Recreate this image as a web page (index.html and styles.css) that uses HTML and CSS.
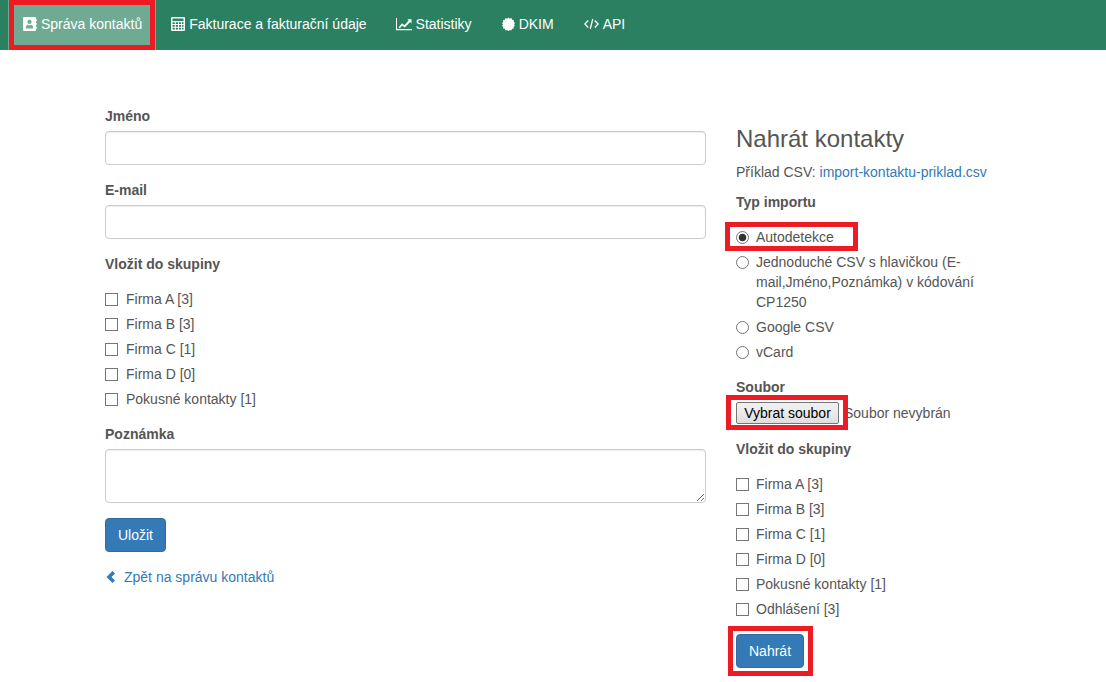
FILE: index.html
```html
<!DOCTYPE html>
<html lang="cs">
<head>
<meta charset="utf-8">
<title>Nahrát kontakty</title>
<link rel="stylesheet" href="styles.css">
</head>
<body>
<div class="page">
  <nav class="topnav">
    <a class="nav-item active" href="#">
      <svg class="ico w14" viewBox="0 0 14 14"><path fill="#fff" fill-rule="evenodd" d="M1 0h11a1 1 0 0 1 1 1v1.500h1v1.500h-1v2.200h1v1.500h-1v2.200h1v1.500h-1V13a1 1 0 0 1-1 1H1a1 1 0 0 1-1-1V1a1 1 0 0 1 1-1zM6.500 2.800a2.100 2.100 0 1 0 0 4.200 2.100 2.100 0 0 0 0-4.200zM2.800 11.500c0-2.200.9-3.700 2.100-3.700.5.400 1 .6 1.600.6s1.100-.2 1.600-.6c1.200 0 2.100 1.500 2.100 3.700z"/></svg>
      <span>Správa kontaktů</span>
    </a>
    <a class="nav-item" href="#">
      <svg class="ico w14" viewBox="0 0 14 14"><path fill="#fff" fill-rule="evenodd" d="M1 0h12a1 1 0 0 1 1 1v12a1 1 0 0 1-1 1H1a1 1 0 0 1-1-1V1a1 1 0 0 1 1-1zM1.500 1.500v2.500h11V1.500zM1.500 5.200v1.800h2.300V5.200zM4.800 5.200v1.800h2.200V5.200zM8 5.200v1.800h2.100V5.200zM11 5.200v1.800h1.500V5.200zM1.500 8v1.800h2.300V8zM4.800 8v1.800h2.200V8zM8 8v1.800h2.100V8zM11 8v1.800h1.500V8zM1.500 10.800v1.700h2.300v-1.700zM4.800 10.800v1.700h2.200v-1.700zM8 10.800v1.700h2.100v-1.700zM11 10.800v1.700h1.500v-1.700z"/></svg>
      <span>Fakturace a fakturační údaje</span>
    </a>
    <a class="nav-item nudge" href="#">
      <svg class="ico w16" viewBox="0 0 16 14"><path fill="#fff" d="M1 1v11h15v1.200H0V1z"/><path fill="#fff" d="M2.500 10.500 6 6.200l2.500 2L12.700 3.600l-1.400-1.300H15.500v4.200l-1.300-1.400L8.700 10.600 6.300 8.600 3.700 11.500z"/></svg>
      <span>Statistiky</span>
    </a>
    <a class="nav-item" href="#">
      <svg class="ico w13" viewBox="0 0 13 14"><path fill="#fff" d="M6.500 .5l1.300 1.200 1.700-.6.6 1.700 1.800.2-.2 1.800 1.300 1.200-1 1.300 1 1.500-1.400 1 .2 1.800-1.800.2-.6 1.600-1.700-.5-1.200 1.300-1.300-1.300-1.700.5-.6-1.600-1.800-.2.2-1.800L0 8.800l1-1.500-1-1.300 1.300-1.200-.2-1.800 1.800-.2.6-1.700 1.700.6z"/></svg>
      <span>DKIM</span>
    </a>
    <a class="nav-item" href="#">
      <svg class="ico w15" viewBox="0 0 15 14"><path fill="none" stroke="#fff" stroke-width="1.300" d="M4.200 3.500.9 7l3.300 3.500M10.800 3.500 14.100 7l-3.300 3.500M8.800 2 6.200 12"/></svg>
      <span>API</span>
    </a>
  </nav>

  <main class="content">
    <form class="left-col">
      <div class="group">
        <label class="field-label">Jméno</label>
        <input class="control" type="text">
      </div>
      <div class="group">
        <label class="field-label">E-mail</label>
        <input class="control" type="text">
      </div>
      <div class="group">
        <label class="field-label">Vložit do skupiny</label>
        <div class="choices">
          <label class="choice"><input type="checkbox"><span>Firma A [3]</span></label>
          <label class="choice"><input type="checkbox"><span>Firma B [3]</span></label>
          <label class="choice"><input type="checkbox"><span>Firma C [1]</span></label>
          <label class="choice"><input type="checkbox"><span>Firma D [0]</span></label>
          <label class="choice"><input type="checkbox"><span>Pokusné kontakty [1]</span></label>
        </div>
      </div>
      <div class="group">
        <label class="field-label">Poznámka</label>
        <textarea class="control area"></textarea>
      </div>
      <div class="group">
        <button class="btn" type="button">Uložit</button>
      </div>
      <a class="back-link" href="#">
        <svg class="chevron" viewBox="0 0 10 12"><path fill="#337ab7" d="M6.500 0 9 2.500 5.500 6 9 9.500 6.500 12 .5 6z"/></svg>
        <span>Zpět na správu kontaktů</span>
      </a>
    </form>

    <form class="right-col">
      <h3 class="title">Nahrát kontakty</h3>
      <p class="example">Příklad CSV: <a href="#">import-kontaktu-priklad.csv</a></p>
      <div class="group">
        <label class="field-label">Typ importu</label>
        <div class="choices">
          <label class="choice"><input type="radio" name="typ" checked><span>Autodetekce</span></label>
          <label class="choice"><input type="radio" name="typ"><span>Jednoduché CSV s hlavičkou (E-mail,Jméno,Poznámka) v kódování CP1250</span></label>
          <label class="choice"><input type="radio" name="typ"><span>Google CSV</span></label>
          <label class="choice"><input type="radio" name="typ"><span>vCard</span></label>
        </div>
      </div>
      <div class="group">
        <label class="field-label">Soubor</label>
        <div class="file-row">
          <button class="file-btn" type="button">Vybrat soubor</button>
          <span class="file-name">Soubor nevybrán</span>
        </div>
      </div>
      <div class="group">
        <label class="field-label">Vložit do skupiny</label>
        <div class="choices">
          <label class="choice"><input type="checkbox"><span>Firma A [3]</span></label>
          <label class="choice"><input type="checkbox"><span>Firma B [3]</span></label>
          <label class="choice"><input type="checkbox"><span>Firma C [1]</span></label>
          <label class="choice"><input type="checkbox"><span>Firma D [0]</span></label>
          <label class="choice"><input type="checkbox"><span>Pokusné kontakty [1]</span></label>
          <label class="choice"><input type="checkbox"><span>Odhlášení [3]</span></label>
        </div>
      </div>
      <button class="btn" type="button">Nahrát</button>
    </form>
  </main>

  <div class="mark mark-nav"></div>
  <div class="mark mark-auto"></div>
  <div class="mark mark-file"></div>
  <div class="mark mark-send"></div>
</div>
</body>
</html>
```
FILE: styles.css
```css
* { box-sizing: border-box; }
html, body { margin: 0; padding: 0; height: 100%; overflow: hidden; background: #fff; }
body { font: 14px/20px "Liberation Sans", Arial, sans-serif; color: #555; }
a { color: #337ab7; text-decoration: none; }

.page { position: relative; height: 682px; overflow: hidden; }

.topnav { display: flex; height: 50px; padding-left: 8px; background: #2a8060; }
.nav-item { display: flex; align-items: center; gap: 4px; padding: 0 15px 2px; color: #fff; white-space: nowrap; }
.nav-item.active { background: #6faa92; padding-right: 14px; }
.nav-item.nudge { padding-left: 14px; }
.ico { display: block; height: 14px; flex: none; }
.w13 { width: 13px; }
.w14 { width: 14px; }
.w15 { width: 15px; }
.w16 { width: 16px; }

.content { display: flex; align-items: flex-start; gap: 30px; padding: 56px 0 0 105px; }
.left-col { width: 601px; flex: none; }
.right-col { width: 252px; flex: none; padding-top: 20px; }

.group { margin-bottom: 15px; }
.field-label { display: block; margin-bottom: 5px; font-weight: 700; }

.control { display: block; width: 100%; height: 34px; padding: 6px 12px; border: 1px solid #ccc; border-radius: 4px; background: #fff; color: #555; font: inherit; box-shadow: inset 0 1px 1px rgba(0,0,0,.075); }
.control.area { height: 54px; resize: vertical; }

.choices { display: flex; flex-direction: column; gap: 5px; padding-top: 10px; }
.choice { display: flex; align-items: flex-start; }
.choice input { appearance: none; flex: none; width: 13px; height: 13px; margin: 4px 7px 0 0; border: 1px solid #767676; background: #fff; }
.left-col .choice input { margin-right: 8px; }
.choice input[type="radio"] { border-radius: 50%; }
.choice input[type="radio"]:checked { background: radial-gradient(circle, #333 0, #333 3.4px, #fff 4.2px); }

.btn { display: block; height: 34px; padding: 6px 12px; border: 1px solid #2e6da4; border-radius: 4px; background: #337ab7; color: #fff; font: inherit; font-weight: 400; }

.back-link { display: flex; align-items: center; gap: 7px; }
.chevron { display: block; width: 12px; height: 12px; flex: none; }

.title { margin: 0 0 10px; font-size: 24px; font-weight: 500; line-height: 26px; }
.example { margin: 0 0 10px; }

.file-row { display: flex; align-items: center; gap: 5px; height: 22px; }
.file-btn { height: 22px; width: 103px; padding: 0; border: 1px solid #767676; border-radius: 2px; background: linear-gradient(#f0f0f0, #ededed 38%, #dedede); color: #000; font: 14px "Liberation Sans", Arial, sans-serif; }
.file-name { white-space: nowrap; }

.mark { position: absolute; border: 5px solid #ed1c24; pointer-events: none; }
.mark-nav { left: 9px; top: 0; width: 146px; height: 50px; }
.mark-auto { left: 725px; top: 222px; width: 133px; height: 29px; }
.mark-file { left: 726px; top: 395px; width: 122px; height: 35px; }
.mark-send { left: 728px; top: 626px; width: 85px; height: 50px; }
```
